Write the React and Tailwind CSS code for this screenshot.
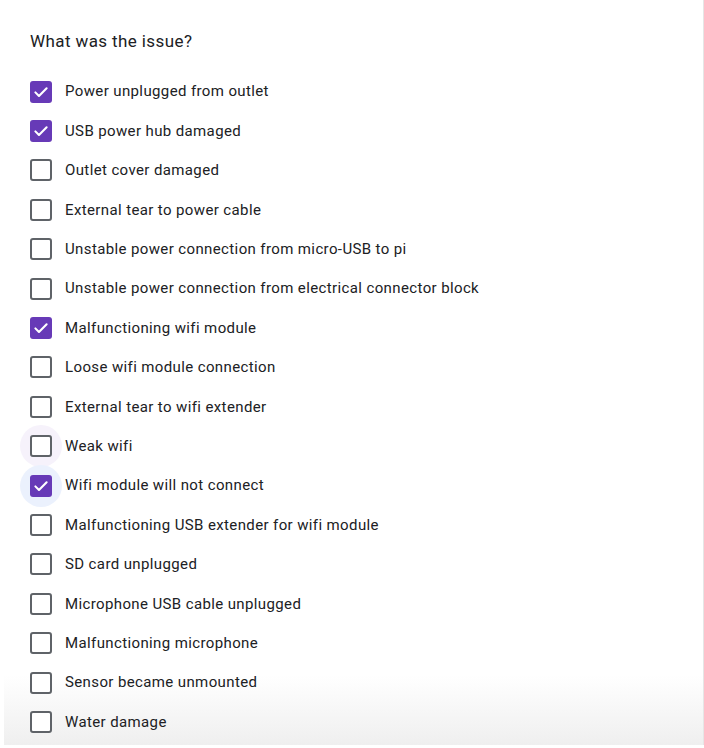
const options = [
  { label: 'Power unplugged from outlet', checked: true },
  { label: 'USB power hub damaged', checked: true },
  { label: 'Outlet cover damaged' },
  { label: 'External tear to power cable' },
  { label: 'Unstable power connection from micro-USB to pi' },
  { label: 'Unstable power connection from electrical connector block' },
  { label: 'Malfunctioning wifi module', checked: true },
  { label: 'Loose wifi module connection' },
  { label: 'External tear to wifi extender' },
  { label: 'Weak wifi', halo: 'bg-[#f6f2fb]' },
  { label: 'Wifi module will not connect', checked: true, halo: 'bg-[#ebf1fd]' },
  { label: 'Malfunctioning USB extender for wifi module' },
  { label: 'SD card unplugged' },
  { label: 'Microphone USB cable unplugged' },
  { label: 'Malfunctioning microphone' },
  { label: 'Sensor became unmounted' },
  { label: 'Water damage' },
];

function Checkbox({ checked, halo }) {
  return (
    <div className="relative w-[22px] h-[22px] flex items-center justify-center">
      {halo && <div className={`absolute -inset-[10px] rounded-full ${halo}`} />}
      {checked ? (
        <div className="relative w-[22px] h-[22px] rounded-[3px] bg-[#673ab7] flex items-center justify-center">
          <svg viewBox="0 0 24 24" className="w-[18px] h-[18px]" fill="none" stroke="white" strokeWidth="2.8" strokeLinecap="round" strokeLinejoin="round">
            <path d="M4.5 12.5l4.8 4.8L19.5 7" />
          </svg>
        </div>
      ) : (
        <div className="relative w-[22px] h-[22px] rounded-[3px] border-2 border-[#5f6368] bg-white" />
      )}
    </div>
  );
}

export default function App() {
  return (
    <div className="w-[704px] h-[748px] bg-white overflow-hidden" style={{ fontFamily: 'Roboto, "Liberation Sans", sans-serif' }}>
      <div className="relative ml-[4px] w-[700px] h-[745px] border-r border-[#e6e6e6] bg-white">
        <div className="absolute inset-x-0 bottom-0 h-[70px] bg-gradient-to-b from-white to-[#efefef]" />
        <div className="relative pl-[26px] pt-[29px]">
          <h2 className="text-[17px] text-[#202124] leading-6 tracking-[0.4px]">What was the issue?</h2>
          <div className="mt-[19px]">
            {options.map((o, i) => (
              <div key={i} className="h-[39.4px] flex items-center gap-[13px]">
                <Checkbox checked={o.checked} halo={o.halo} />
                <span className="text-[15px] text-[#202124] tracking-[0.38px]">{o.label}</span>
              </div>
            ))}
          </div>
        </div>
      </div>
    </div>
  );
}
